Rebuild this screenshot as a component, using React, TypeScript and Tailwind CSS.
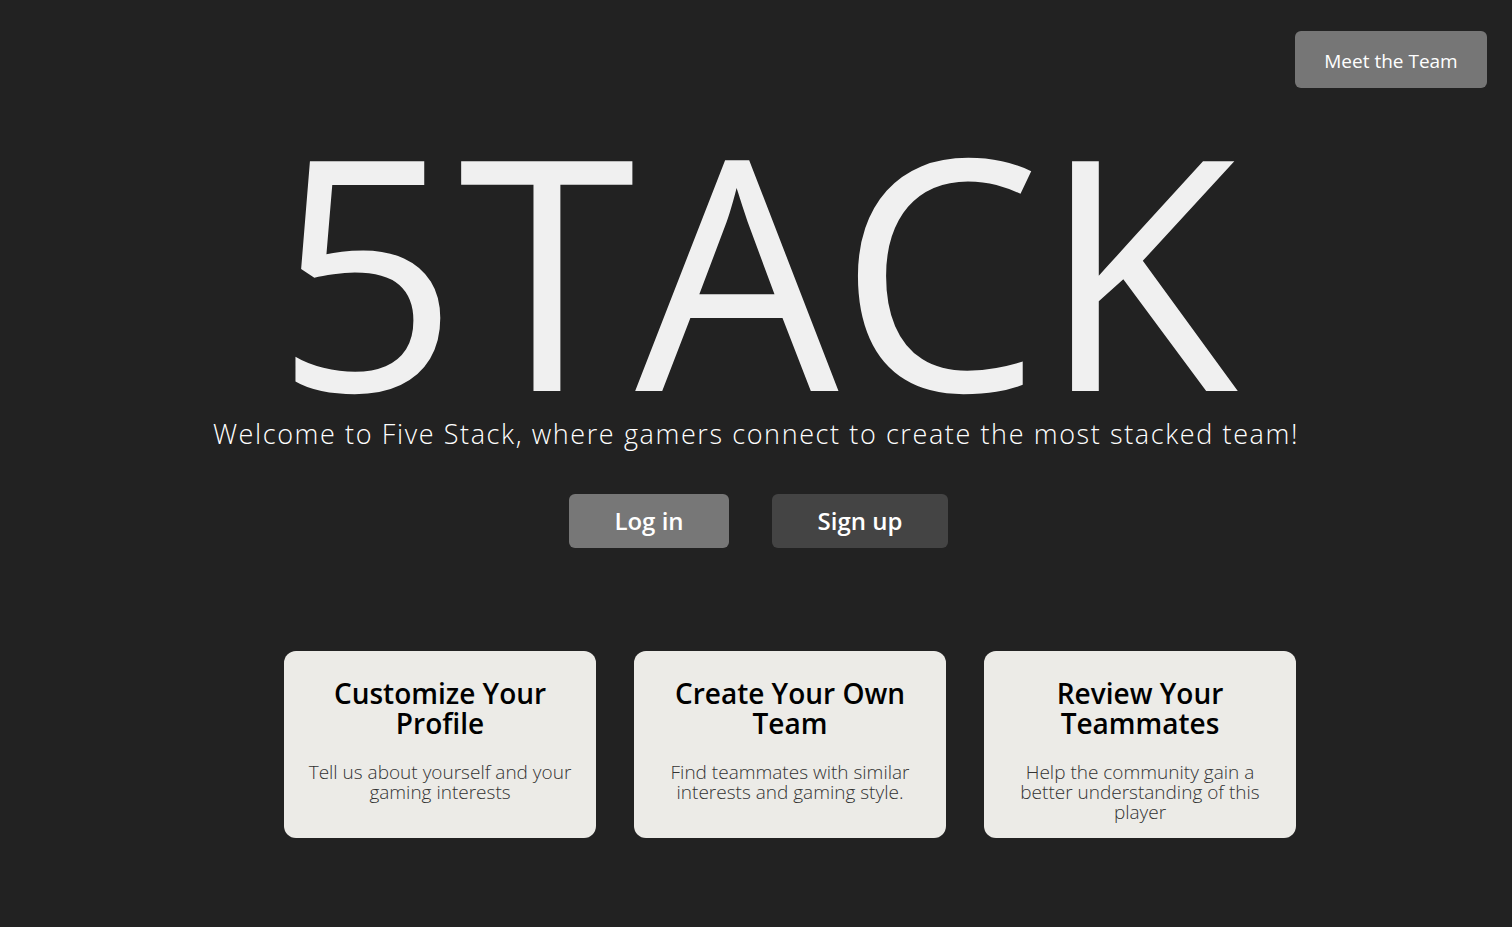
import React from "react";

const features = [
  {
    title: "Customize Your Profile",
    text: "Tell us about yourself and your gaming interests",
  },
  {
    title: "Create Your Own Team",
    text: "Find teammates with similar interests and gaming style.",
  },
  {
    title: "Review Your Teammates",
    text: "Help the community gain a better understanding of this player",
  },
];

export default function App() {
  return (
    <main className="min-h-screen w-full bg-[#222222] text-white font-['Open_Sans',sans-serif] flex flex-col">
      {/* top bar */}
      <header className="flex justify-end pt-[31px] pr-[25px]">
        <button className="w-[192px] h-[57px] pt-[3px] bg-[#767676] rounded-[6px] text-[19px] text-white">
          Meet the Team
        </button>
      </header>

      {/* hero */}
      <section className="flex flex-col items-center">
        <h1 className="mt-[50px] text-[322px] leading-[0.8] text-[#f0f0f0] tracking-[-0.5px]">5TACK</h1>
        <p className="mt-[18px] text-[27px] font-light tracking-[1.6px] text-white">
          Welcome to Five Stack, where gamers connect to create the most stacked team!
        </p>

        <div className="mt-[40px] ml-[5px] flex gap-[43px]">
          <button className="w-[160px] h-[54px] bg-[#777777] rounded-[6px] text-[24px] font-semibold text-white">
            Log in
          </button>
          <button className="w-[176px] h-[54px] bg-[#444444] rounded-[6px] text-[24px] font-semibold text-white">
            Sign up
          </button>
        </div>
      </section>

      {/* feature cards */}
      <section className="mt-[103px] pl-[68px] flex justify-center gap-[38px]">
        {features.map((f) => (
          <div
            key={f.title}
            className="w-[312px] h-[187px] bg-[#ecebe7] rounded-[12px] px-[20px] pt-[27px] flex flex-col items-center text-center"
          >
            <h2 className="text-[28px] leading-[30px] font-semibold text-black px-[20px]">{f.title}</h2>
            <p className="mt-[24px] text-[19px] leading-[20px] font-light text-[#333333]">{f.text}</p>
          </div>
        ))}
      </section>
    </main>
  );
}
